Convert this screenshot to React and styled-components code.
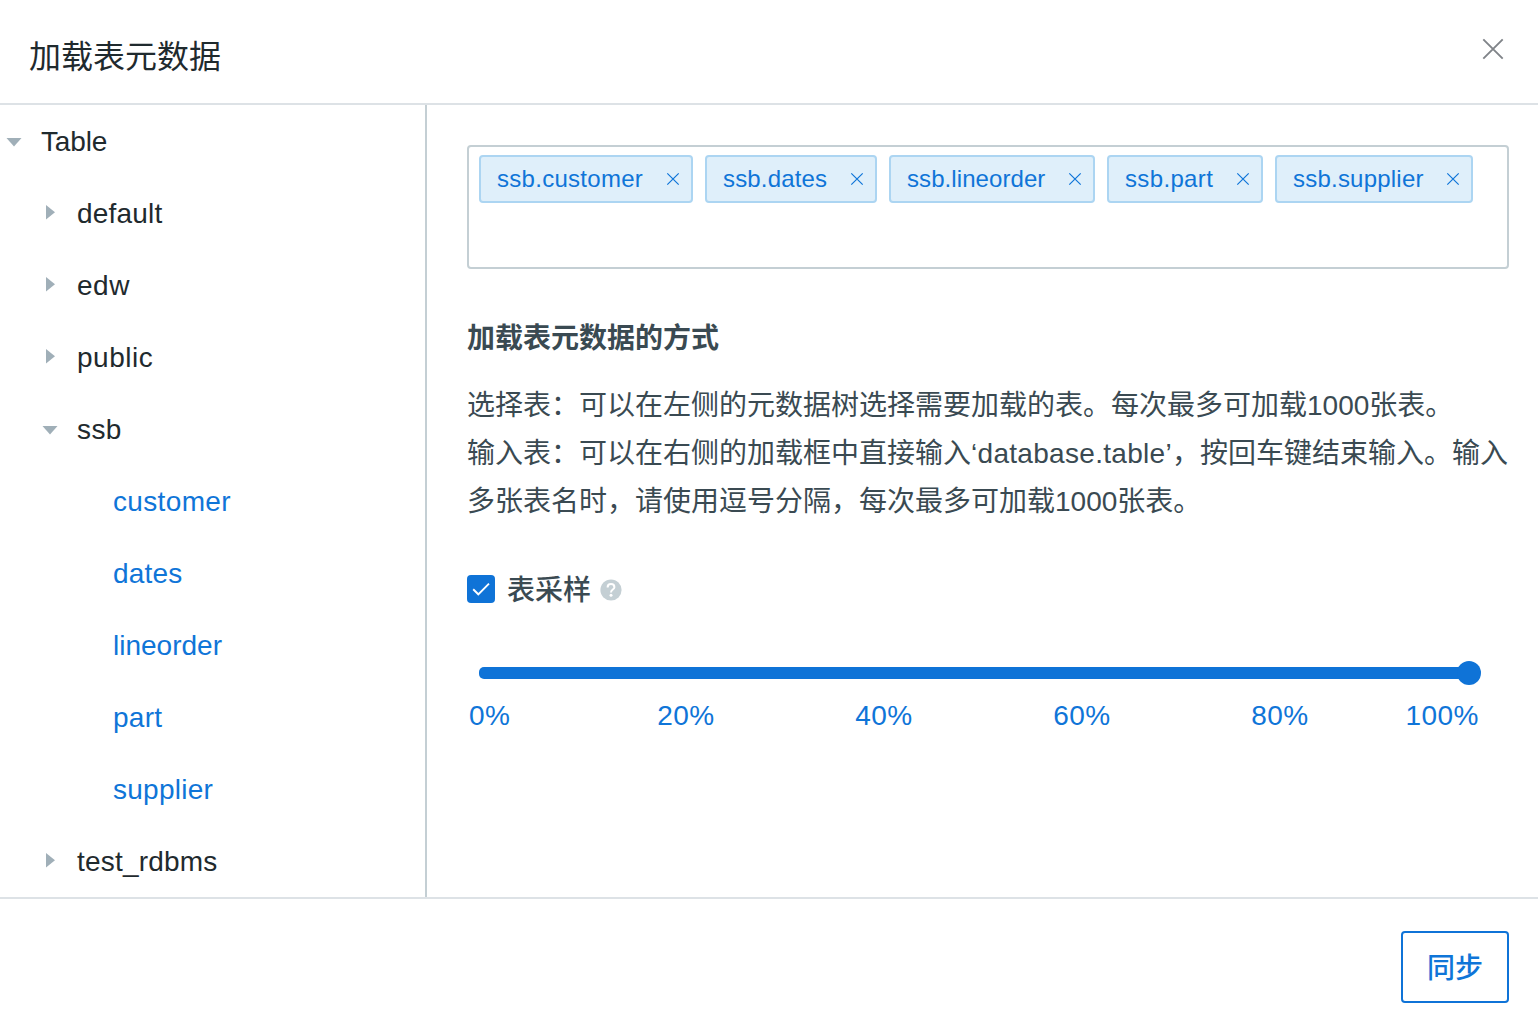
import React from "react";
import styled, { createGlobalStyle } from "styled-components";

const GlobalStyle = createGlobalStyle`
  * { box-sizing: border-box; }
  body { margin: 0; background: #fff; overflow: hidden; }
`;

const Dialog = styled.div`
  display: flex;
  flex-direction: column;
  width: 1538px;
  height: 1017px;
  background: #fff;
  color: #1f2a2e;
  font-family: "Liberation Sans", "Noto Sans CJK SC", sans-serif;
  font-size: 28px;
`;

const Header = styled.header`
  display: flex;
  justify-content: space-between;
  height: 105px;
  padding: 32px 34px 0 29px;
  border-bottom: 2px solid #dde2e6;
`;

const Title = styled.h1`
  margin: 1px 0 0;
  font-size: 32px;
  line-height: 48px;
  font-weight: 400;
`;

const CloseButton = styled.button`
  display: flex;
  width: 22px;
  height: 22px;
  margin-top: 6px;
  padding: 0;
  border: 0;
  background: none;
`;

const Main = styled.div`
  display: flex;
  height: 792px;
`;

const Tree = styled.nav`
  width: 427px;
  border-right: 2px solid #c4cfd4;
`;

const TreeRow = styled.div`
  display: flex;
  align-items: center;
  height: 72px;
  padding-left: ${(p) => p.$level * 36 + 5}px;
  color: ${(p) => (p.$leaf ? "#0f75d8" : "#1f2a2e")};
  letter-spacing: ${(p) => p.$spacing || 0}px;
`;

const RowLabel = styled.span`
  padding-top: 2px;
`;

const ArrowSlot = styled.span`
  display: flex;
  width: 36px;
  height: 18px;
  flex: none;
`;

const Panel = styled.section`
  flex: 1;
  padding: 40px 29px 0 40px;
  color: #3a4a52;
`;

const TagInput = styled.div`
  display: flex;
  align-items: flex-start;
  gap: 12px;
  height: 124px;
  padding: 8px 10px;
  border: 2px solid #c4cfd4;
  border-radius: 4px;
`;

const Tag = styled.span`
  display: flex;
  flex: none;
  align-items: center;
  justify-content: space-between;
  width: ${(p) => p.$width}px;
  height: 48px;
  padding: 0 11px 0 16px;
  border: 2px solid #acd5f2;
  border-radius: 4px;
  background: #dfeffa;
  color: #0f75d8;
  font-size: 24px;
  white-space: nowrap;
  letter-spacing: ${(p) => p.$spacing}px;
`;

const MethodTitle = styled.h2`
  margin: 50px 0 0;
  font-size: 28px;
  line-height: 40px;
  font-weight: 700;
`;

const Method = styled.p`
  margin: 23px -4px 0 0;
  line-height: 48px;
  white-space: nowrap;
`;

const Line = styled.span`
  display: block;
`;

const TableName = styled.span`
  letter-spacing: 0.3px;
`;

const SampleRow = styled.div`
  display: flex;
  align-items: center;
  height: 40px;
  margin-top: 43px;
`;

const Checkbox = styled.span`
  display: flex;
  width: 28px;
  height: 28px;
  border-radius: 4px;
  background: #0f73d7;
`;

const SampleLabel = styled.span`
  margin: 0 8.5px 2px 12px;
  font-weight: 500;
`;

const Help = styled.svg`
  display: block;
  margin-top: 2px;
`;

const Slider = styled.div`
  display: flex;
  align-items: center;
  height: 24px;
  margin: 52px 28px 0 12px;
`;

const Track = styled.div`
  flex: 1;
  height: 12px;
  margin-right: -12px;
  border-radius: 5px;
  background: #0f73d7;
`;

const Thumb = styled.div`
  width: 24px;
  height: 24px;
  border-radius: 50%;
  background: #0f73d7;
`;

const Marks = styled.div`
  display: grid;
  grid-template-columns: 118px repeat(4, 198px) 100px;
  margin-top: 11px;
  padding-left: 2px;
  color: #0f75d8;
  line-height: 40px;
  letter-spacing: 0.5px;
`;

const Mark = styled.span`
  text-align: ${(p) => p.$align || "center"};
`;

const Footer = styled.footer`
  display: flex;
  justify-content: flex-end;
  height: 120px;
  padding: 32px 29px 0 0;
  border-top: 2px solid #dde2e6;
`;

const SyncButton = styled.button`
  width: 108px;
  height: 72px;
  padding: 0 0 2px;
  border: 2px solid #0f73d7;
  border-radius: 4px;
  background: #fff;
  color: #0f75d8;
  font: 500 28px "Liberation Sans", "Noto Sans CJK SC", sans-serif;
`;

const rows = [
  { label: "Table", level: 0, open: true, spacing: -0.15 },
  { label: "default", level: 1, spacing: 0.2 },
  { label: "edw", level: 1, spacing: 0.5 },
  { label: "public", level: 1, spacing: 0.5 },
  { label: "ssb", level: 1, open: true, spacing: 0.4 },
  { label: "customer", level: 2, leaf: true, spacing: 0.35 },
  { label: "dates", level: 2, leaf: true, spacing: 0.2 },
  { label: "lineorder", level: 2, leaf: true },
  { label: "part", level: 2, leaf: true, spacing: 0.3 },
  { label: "supplier", level: 2, leaf: true, spacing: 0.25 },
  { label: "test_rdbms", level: 1, spacing: 0.2 },
];

const tags = [
  { label: "ssb.customer", width: 214, spacing: 0.28 },
  { label: "ssb.dates", width: 172, spacing: 0.17 },
  { label: "ssb.lineorder", width: 206, spacing: 0.08 },
  { label: "ssb.part", width: 156, spacing: 0.35 },
  { label: "ssb.supplier", width: 198, spacing: 0.22 },
];

const Cross = ({ size, stroke, width }) => (
  <svg width={size} height={size} viewBox={`0 0 ${size} ${size}`}>
    <path
      d={`M1.3 1.3L${size - 1.3} ${size - 1.3}M${size - 1.3} 1.3L1.3 ${size - 1.3}`}
      stroke={stroke}
      strokeWidth={width}
      fill="none"
    />
  </svg>
);

const Arrow = ({ open }) => (
  <svg width="18" height="18">
    <path d={open ? "M1.5 6H16.5L9 14.5Z" : "M5 1V15.5L14 8.2Z"} fill="#a0afb8" />
  </svg>
);

export default function App() {
  return (
    <Dialog>
      <GlobalStyle />
      <Header>
        <Title>加载表元数据</Title>
        <CloseButton aria-label="close">
          <Cross size={22} stroke="#808489" width={1.9} />
        </CloseButton>
      </Header>
      <Main>
        <Tree>
          {rows.map((r) => (
            <TreeRow key={r.label} $level={r.level} $leaf={r.leaf} $spacing={r.spacing}>
              <ArrowSlot>{!r.leaf && <Arrow open={r.open} />}</ArrowSlot>
              <RowLabel>{r.label}</RowLabel>
            </TreeRow>
          ))}
        </Tree>
        <Panel>
          <TagInput>
            {tags.map((t) => (
              <Tag key={t.label} $width={t.width} $spacing={t.spacing}>
                {t.label}
                <Cross size={14} stroke="#0f75d8" width={1.2} />
              </Tag>
            ))}
          </TagInput>
          <MethodTitle>加载表元数据的方式</MethodTitle>
          <Method>
            <Line>选择表：可以在左侧的元数据树选择需要加载的表。每次最多可加载1000张表。</Line>
            <Line>
              输入表：可以在右侧的加载框中直接输入<TableName>‘database.table’</TableName>
              ，按回车键结束输入。输入
            </Line>
            <Line>多张表名时，请使用逗号分隔，每次最多可加载1000张表。</Line>
          </Method>
          <SampleRow>
            <Checkbox>
              <svg width="28" height="28">
                <path d="M6.2 14.3L11.3 19.3L22 8.7" stroke="#fff" strokeWidth="1.9" fill="none" />
              </svg>
            </Checkbox>
            <SampleLabel>表采样</SampleLabel>
            <Help width="22" height="22" viewBox="0 0 22 22">
              <circle cx="11" cy="11" r="10.6" fill="#c4cfd4" />
              <path
                d="M7.6 8.4C7.6 6.2 9 5.1 11 5.1S14.4 6.3 14.4 8.2C14.4 10.6 11 10.6 11 13.4"
                stroke="#fff"
                strokeWidth="2"
                fill="none"
              />
              <circle cx="11" cy="16.3" r="1.5" fill="#fff" />
            </Help>
          </SampleRow>
          <Slider>
            <Track />
            <Thumb />
          </Slider>
          <Marks>
            <Mark $align="left">0%</Mark>
            <Mark>20%</Mark>
            <Mark>40%</Mark>
            <Mark>60%</Mark>
            <Mark>80%</Mark>
            <Mark $align="right">100%</Mark>
          </Marks>
        </Panel>
      </Main>
      <Footer>
        <SyncButton>同步</SyncButton>
      </Footer>
    </Dialog>
  );
}
